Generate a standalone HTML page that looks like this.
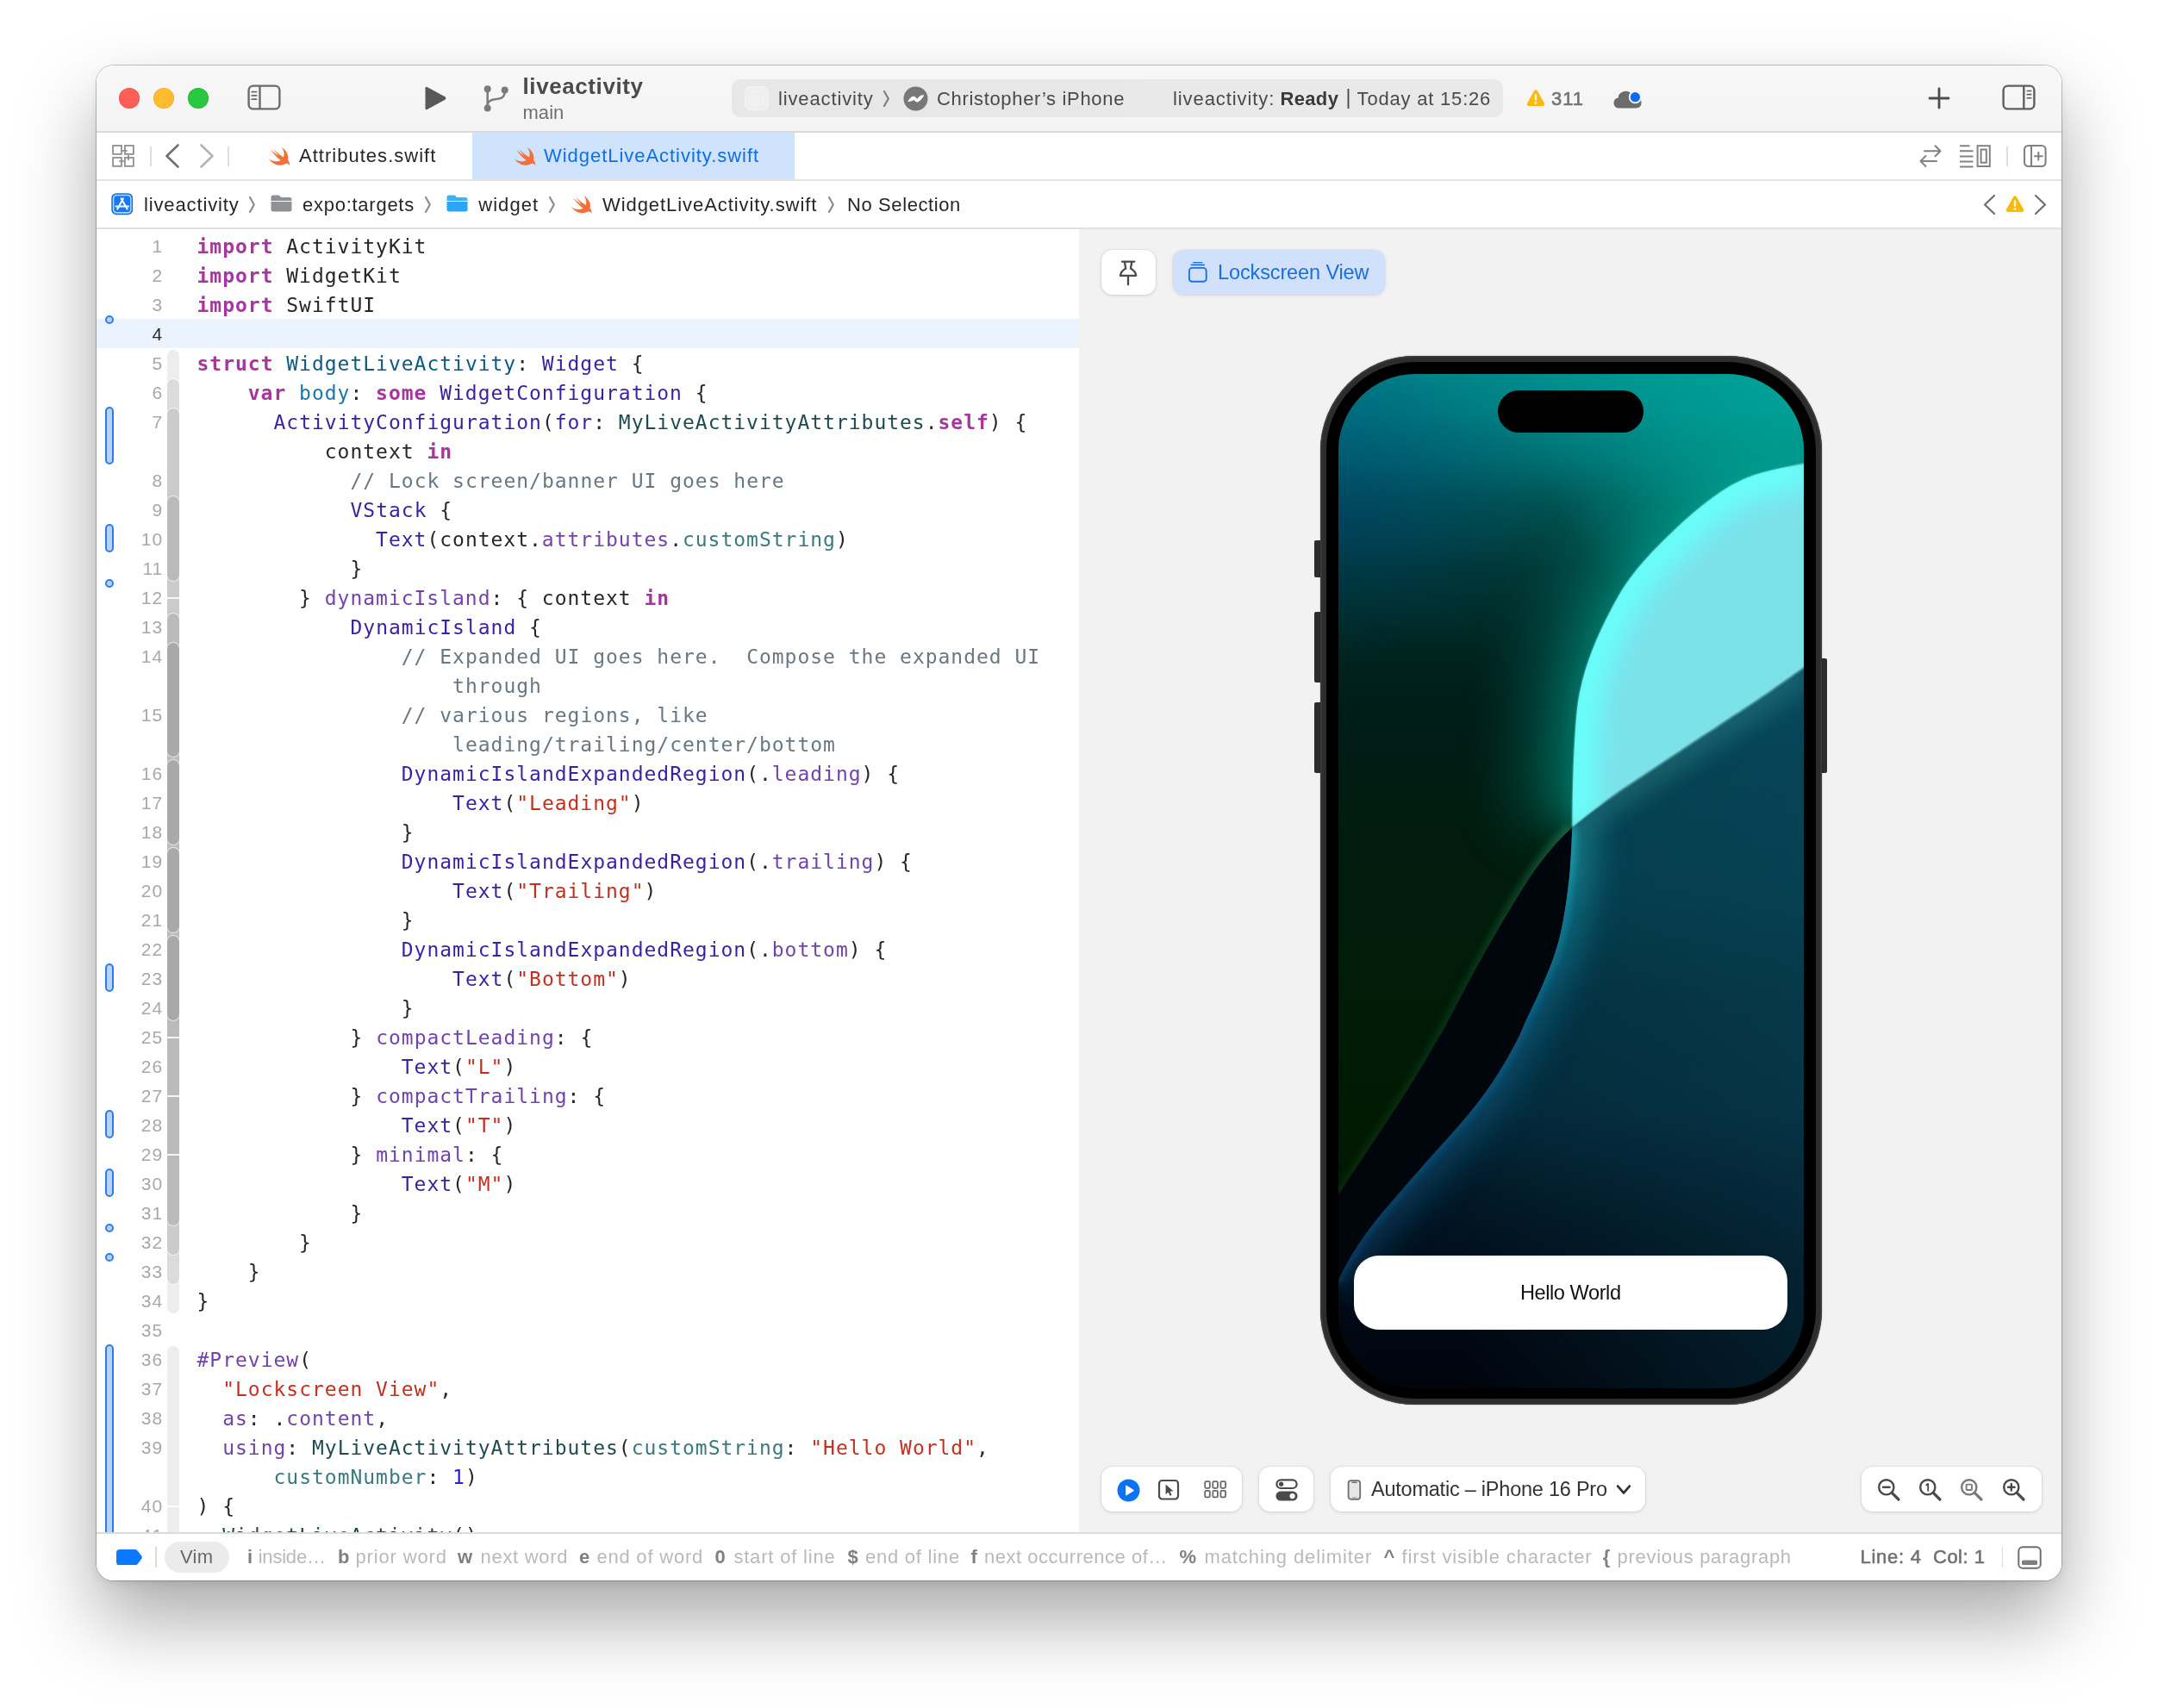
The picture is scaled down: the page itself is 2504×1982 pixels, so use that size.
<!DOCTYPE html><html><head><meta charset="utf-8"><title>Xcode</title><style>
html,body{margin:0;padding:0;background:#fff}
body{width:2504px;height:1982px;position:relative;overflow:hidden;font-family:"Liberation Sans",sans-serif}
.a{position:absolute;display:block}
.t{position:absolute;white-space:pre;font-style:normal}
#sh{left:112px;top:76px;width:2280px;height:1758px;border-radius:20px;box-shadow:0 0 0 1px rgba(0,0,0,.22),0 45px 90px rgba(0,0,0,.34),0 5px 12px rgba(0,0,0,.07)}
#win{left:112px;top:76px;width:2280px;height:1758px;border-radius:20px;overflow:hidden;background:#fff}
#abs{left:-112px;top:-76px;width:2504px;height:1982px;will-change:transform}
.ln{position:absolute;left:120.2px;width:69px;text-align:right;font:21px/34px "Liberation Sans",sans-serif;letter-spacing:1px;height:34px}
.cl{position:absolute;white-space:pre;font:23px/34px "DejaVu Sans Mono","Liberation Mono",monospace;letter-spacing:.98px;height:34px;color:#262626}
.cl i{font-style:normal}
.k{color:#a8359f;font-weight:bold}.td{color:#0b5a84}.d{color:#1676a6}.st{color:#3b1fa4}.pt{color:#1d4b50}
.pm{color:#377b80}.sm{color:#7242ae}.s{color:#c62f1e}.c{color:#697784}.n{color:#2b20cf}
</style></head><body>
<div id="sh" class="a"></div><div id="win" class="a"><div id="abs" class="a">
<div class="a" style="left:112px;top:76px;width:2280px;height:77px;background:linear-gradient(#f7f7f7,#f4f4f4)"></div>
<div class="a" style="left:112px;top:152px;width:2280px;height:1.5px;background:#dadada"></div>
<div class="a" style="left:138px;top:101.7px;width:24px;height:24px;border-radius:50%;background:#fe5f57;box-shadow:inset 0 0 0 1px #e0443e66"></div>
<div class="a" style="left:178px;top:101.7px;width:24px;height:24px;border-radius:50%;background:#febc2e;box-shadow:inset 0 0 0 1px #dea12366"></div>
<div class="a" style="left:218px;top:101.7px;width:24px;height:24px;border-radius:50%;background:#28c840;box-shadow:inset 0 0 0 1px #1aab2966"></div>
<svg class="a" style="left:285.5px;top:97px" width="41" height="32" viewBox="0 0 41 32" ><rect x="2.6" y="2.6" width="35.8" height="26.8" rx="5.2" fill="none" stroke="#6b6b6b" stroke-width="2.4"/><path d="M15.5 3v26" stroke="#6b6b6b" stroke-width="2.4"/><path d="M6.2 9.6h5.4M6.2 13.9h5.4M6.2 18.2h5.4" stroke="#6b6b6b" stroke-width="1.8" stroke-linecap="round"/></svg>
<svg class="a" style="left:489.8px;top:98px" width="30" height="32" viewBox="0 0 30 32" ><path d="M3.5 4.2 Q3.5 2 5.6 3 L26.4 14.3 Q28.4 16 26.4 17.7 L5.6 29 Q3.5 30 3.5 27.8Z" fill="#595957"/></svg>
<svg class="a" style="left:560px;top:97px" width="32" height="35" viewBox="0 0 32 35" ><g fill="none" stroke="#7b7b7b" stroke-width="2.5" stroke-linecap="round"><path d="M5.7 7v21"/><path d="M25.7 8.5 C25.7 17 21 17.5 14 18.3 C9 19 5.7 20.5 5.7 25"/></g><g fill="#7b7b7b"><circle cx="5.7" cy="6.3" r="4"/><circle cx="5.7" cy="28.4" r="4"/><circle cx="25.7" cy="7.5" r="4"/></g></svg>
<span class="t" style="left:606.5px;top:87.3px;font-size:26px;line-height:1;color:#4b4b4b;font-weight:bold;letter-spacing:0.59px;">liveactivity</span>
<span class="t" style="left:606.5px;top:119.6px;font-size:22px;line-height:1;color:#707070;letter-spacing:0.04px;">main</span>
<div class="a" style="left:848.5px;top:91.5px;width:895.5px;height:44.5px;border-radius:11px;background:#e9e9e9"></div>
<div class="a" style="left:848.5px;top:91.5px;width:480px;height:44.5px;border-radius:11px 0 0 11px;background:linear-gradient(90deg,#e7e7e7 85%,#e9e9e9)"></div>
<div class="a" style="left:864px;top:100px;width:27.5px;height:28px;border-radius:7px;background:#efefef;box-shadow:inset 0 0 0 1px #f3f3f3"></div>
<div class="a" style="left:869px;top:105.5px;width:17px;height:17px;border-radius:50%;border:1px solid #f6f6f6;box-sizing:border-box"></div>
<div class="a" style="left:873px;top:109.5px;width:9px;height:9px;border-radius:50%;border:1px solid #f6f6f6;box-sizing:border-box"></div>
<span class="t" style="left:903.0px;top:103.9px;font-size:22px;line-height:1;color:#4a4a4a;letter-spacing:0.86px;">liveactivity</span>
<svg class="a" style="left:1025px;top:104.5px" width="7" height="19" viewBox="0 0 7 19" ><path d="M1 1 L5.8 9.5 L1 18" fill="none" stroke="#808080" stroke-width="2.2" stroke-linecap="round" stroke-linejoin="round"/></svg>
<svg class="a" style="left:1047.5px;top:99.5px" width="29" height="29" viewBox="0 0 29 29" ><circle cx="14.5" cy="14.5" r="14" fill="#777"/><path d="M6 17.5 Q10 11.5 13 12.5 Q15.5 13.5 16 16.5 Q19.5 10.5 23.5 11 Q20 16.5 17 17.8 Q14 18 13.2 15 Q10 17 6 17.5Z" fill="#fff" stroke="#fff" stroke-width="1.2" stroke-linejoin="round"/></svg>
<span class="t" style="left:1087.0px;top:103.9px;font-size:22px;line-height:1;color:#4a4a4a;letter-spacing:0.67px;">Christopher’s iPhone</span>
<span class="t" style="left:1361.0px;top:103.9px;font-size:22px;line-height:1;color:#4a4a4a;letter-spacing:0.92px;">liveactivity: </span>
<span class="t" style="left:1485.4px;top:103.9px;font-size:22px;line-height:1;color:#3a3a3a;font-weight:bold;letter-spacing:0.36px;">Ready</span>
<span class="t" style="left:1561.5px;top:102.0px;font-size:23px;line-height:1;color:#4a4a4a;">|</span>
<span class="t" style="left:1574.6px;top:103.9px;font-size:22px;line-height:1;color:#4a4a4a;letter-spacing:0.80px;">Today at 15:26</span>
<svg class="a" style="left:1771px;top:103px" width="22" height="21" viewBox="0 0 21 20" ><path d="M10.5 1.2 Q11.6 1.2 12.3 2.4 L20 16 Q21 18.8 18.2 19 L2.8 19 Q0 18.8 1 16 L8.7 2.4 Q9.4 1.2 10.5 1.2Z" fill="#fcb90b"/><rect x="9.4" y="6" width="2.2" height="7" rx="1.1" fill="#fff"/><circle cx="10.5" cy="15.6" r="1.3" fill="#fff"/></svg>
<span class="t" style="left:1800.0px;top:104.0px;font-size:22px;line-height:1;color:#737373;letter-spacing:0.96px;-webkit-text-stroke:.6px #737373;">311</span>
<svg class="a" style="left:1871px;top:102px" width="36" height="26" viewBox="0 0 36 26" ><path d="M8.5 23.5 Q1.5 23.5 1.5 17.5 Q1.5 12.5 6.5 11.8 Q7 6 12.5 4.2 Q19 2.5 22.5 8 Q26 7.5 28.5 10.5 Q33.5 11 33.5 17 Q33.5 23.5 27 23.5Z" fill="#6c6c6c"/><circle cx="26.4" cy="10.7" r="7.6" fill="#f5f5f5"/><circle cx="26.4" cy="10.7" r="5.6" fill="#0a6cf5"/></svg>
<svg class="a" style="left:2237px;top:101px" width="26" height="26" viewBox="0 0 26 26" ><path d="M13 2v22M2 13h22" stroke="#4d4d4d" stroke-width="2.8" stroke-linecap="round"/></svg>
<svg class="a" style="left:2321.5px;top:97px" width="41" height="32" viewBox="0 0 41 32" ><rect x="2.6" y="2.6" width="35.8" height="26.8" rx="5.2" fill="none" stroke="#5e5e5e" stroke-width="2.4"/><path d="M26.3 3v26" stroke="#5e5e5e" stroke-width="2.4"/><path d="M30.2 8.5h4.6M30.2 12.6h4.6M30.2 16.7h4.6" stroke="#5e5e5e" stroke-width="1.6" stroke-linecap="round"/></svg>
<div class="a" style="left:112px;top:153.5px;width:2280px;height:55px;background:#fff"></div>
<div class="a" style="left:548px;top:153.5px;width:373.5px;height:55px;background:#cfe3fd"></div>
<div class="a" style="left:112px;top:208px;width:2280px;height:1.5px;background:#e2e2e2"></div>
<svg class="a" style="left:129px;top:167px" width="28" height="28" viewBox="0 0 28 28" ><g fill="none" stroke="#8b8b8b" stroke-width="1.7"><rect x="2.05" y="1.95" width="9.9" height="9.9"/><rect x="15.95" y="1.95" width="9.9" height="9.9"/><rect x="2.05" y="15.95" width="9.9" height="9.9"/><rect x="15.95" y="15.95" width="9.9" height="9.9"/><path d="M12.6 7.9h6M20 12.6v6.4M9.2 20h6"/></g></svg>
<div class="a" style="left:174px;top:169.5px;width:2px;height:23px;background:#dedede"></div>
<svg class="a" style="left:190px;top:166px" width="20" height="30" viewBox="0 0 20 30" ><path d="M16.5 2.5 L3.5 15 L16.5 27.5" fill="none" stroke="#707070" stroke-width="2.6" stroke-linecap="round" stroke-linejoin="round"/></svg>
<svg class="a" style="left:230px;top:166px" width="20" height="30" viewBox="0 0 20 30" ><path d="M3.5 2.5 L16.5 15 L3.5 27.5" fill="none" stroke="#b3b3b3" stroke-width="2.6" stroke-linecap="round" stroke-linejoin="round"/></svg>
<div class="a" style="left:264px;top:169.5px;width:2px;height:23px;background:#dedede"></div>
<svg class="a" style="left:312px;top:170.5px" width="24.5" height="21.5" viewBox="2.4 3.4 18.5 16.7" preserveAspectRatio="none"><defs><linearGradient id="sg312" x1="0" y1="0" x2="0" y2="1"><stop offset="0" stop-color="#f88a36"/><stop offset="1" stop-color="#f4502f"/></linearGradient></defs><path d="M13.543 3.41c4.114 2.47 6.545 7.162 5.549 11.131-.024.093-.05.181-.076.272l.002.001c2.062 2.538 1.5 5.258 1.236 4.745-1.072-2.086-3.066-1.568-4.088-1.043a6.803 6.803 0 0 1-.281.158l-.02.012-.002.002c-2.115 1.123-4.957 1.205-7.812-.022a12.568 12.568 0 0 1-5.64-4.838c.649.48 1.35.902 2.097 1.252 3.019 1.414 6.051 1.311 8.197-.002C9.651 12.73 7.101 9.67 5.146 7.191a10.628 10.628 0 0 1-1.005-1.384c2.34 2.142 6.038 4.83 7.365 5.576C8.69 8.408 6.208 4.743 6.324 4.86c4.436 4.47 8.528 6.996 8.528 6.996.154.085.27.154.36.213.085-.215.16-.437.224-.668.708-2.588-.09-5.548-1.893-7.992z" fill="#f4703a"/></svg>
<span class="t" style="left:347.0px;top:170.0px;font-size:22px;line-height:1;color:#262626;letter-spacing:1.02px;">Attributes.swift</span>
<svg class="a" style="left:596.5px;top:170.5px" width="24.5" height="21.5" viewBox="2.4 3.4 18.5 16.7" preserveAspectRatio="none"><defs><linearGradient id="sg596" x1="0" y1="0" x2="0" y2="1"><stop offset="0" stop-color="#f88a36"/><stop offset="1" stop-color="#f4502f"/></linearGradient></defs><path d="M13.543 3.41c4.114 2.47 6.545 7.162 5.549 11.131-.024.093-.05.181-.076.272l.002.001c2.062 2.538 1.5 5.258 1.236 4.745-1.072-2.086-3.066-1.568-4.088-1.043a6.803 6.803 0 0 1-.281.158l-.02.012-.002.002c-2.115 1.123-4.957 1.205-7.812-.022a12.568 12.568 0 0 1-5.64-4.838c.649.48 1.35.902 2.097 1.252 3.019 1.414 6.051 1.311 8.197-.002C9.651 12.73 7.101 9.67 5.146 7.191a10.628 10.628 0 0 1-1.005-1.384c2.34 2.142 6.038 4.83 7.365 5.576C8.69 8.408 6.208 4.743 6.324 4.86c4.436 4.47 8.528 6.996 8.528 6.996.154.085.27.154.36.213.085-.215.16-.437.224-.668.708-2.588-.09-5.548-1.893-7.992z" fill="#f4703a"/></svg>
<span class="t" style="left:631.0px;top:170.0px;font-size:22px;line-height:1;color:#0f6fe6;letter-spacing:0.96px;">WidgetLiveActivity.swift</span>
<svg class="a" style="left:2226px;top:166px" width="28" height="30" viewBox="0 0 28 30" ><g fill="none" stroke="#828282" stroke-width="2" stroke-linecap="round" stroke-linejoin="round"><path d="M7 9.2h18.5M19.5 3.2l6 6-6 6"/><path d="M21 21h-18.5M8.5 15l-6 6 6 6"/></g></svg>
<svg class="a" style="left:2273px;top:167px" width="38" height="28" viewBox="0 0 38 28" ><g fill="none" stroke="#828282" stroke-width="2"><path d="M1 2.2h11.5M1 8.3h15.5M1 14.4h15.5M1 20.5h15.5M1 26.4h15.5"/><rect x="21.6" y="2.2" width="14.2" height="23.8"/><rect x="25.6" y="6.5" width="6.2" height="15.2"/></g></svg>
<div class="a" style="left:2328px;top:169.5px;width:1.5px;height:23px;background:#dedede"></div>
<svg class="a" style="left:2346.5px;top:167px" width="29" height="28" viewBox="0 0 29 28" ><g fill="none" stroke="#828282" stroke-width="2.1" stroke-linecap="round"><rect x="2" y="2" width="24.6" height="24" rx="4.5"/><path d="M10 2v24"/><path d="M18.3 9.8v8.8M13.9 14.2h8.8"/></g></svg>
<div class="a" style="left:112px;top:209.5px;width:2280px;height:55px;background:#fff"></div>
<div class="a" style="left:112px;top:264px;width:2280px;height:1.5px;background:#e0e0e0"></div>
<svg class="a" style="left:129px;top:223.5px" width="26" height="26" viewBox="0 0 26 26" ><rect x="0.3" y="0.2" width="24.8" height="25" rx="5.6" fill="#1e6adb"/><rect x="1.8" y="1.7" width="21.8" height="22" rx="4.4" fill="#a2d8ff"/><rect x="3.4" y="3.3" width="18.6" height="18.8" rx="3" fill="#1579f6"/><g stroke="#fff" stroke-width="2" stroke-linecap="round" fill="none"><path d="M13.9 6.4 L7.3 18.6M11.6 6.4 L18.6 18.4M5.6 15.4h14.4"/></g></svg>
<span class="t" style="left:167.0px;top:226.6px;font-size:22px;line-height:1;color:#262626;letter-spacing:0.86px;">liveactivity</span>
<svg class="a" style="left:288.5px;top:228px" width="7" height="19" viewBox="0 0 7 19" ><path d="M1 1 L5.8 9.5 L1 18" fill="none" stroke="#8c8c8c" stroke-width="2.2" stroke-linecap="round" stroke-linejoin="round"/></svg>
<svg class="a" style="left:314px;top:226px" width="25" height="20" viewBox="0 0 25 20" ><path d="M0.5 3 Q0.5 0.5 3 0.5 L8.5 0.5 Q10 0.5 11 1.8 L12 3 L22 3 Q24.5 3 24.5 5.5 L24.5 7 L0.5 7Z" fill="#8e9294"/><path d="M0.5 8 L24.5 8 L24.5 17 Q24.5 19.5 22 19.5 L3 19.5 Q0.5 19.5 0.5 17Z" fill="#8e9294"/></svg>
<span class="t" style="left:351.0px;top:226.6px;font-size:22px;line-height:1;color:#262626;letter-spacing:0.74px;">expo:targets</span>
<svg class="a" style="left:492.5px;top:228px" width="7" height="19" viewBox="0 0 7 19" ><path d="M1 1 L5.8 9.5 L1 18" fill="none" stroke="#8c8c8c" stroke-width="2.2" stroke-linecap="round" stroke-linejoin="round"/></svg>
<svg class="a" style="left:517.5px;top:226px" width="25" height="20" viewBox="0 0 25 20" ><path d="M0.5 3 Q0.5 0.5 3 0.5 L8.5 0.5 Q10 0.5 11 1.8 L12 3 L22 3 Q24.5 3 24.5 5.5 L24.5 7 L0.5 7Z" fill="#38b3f8"/><path d="M0.5 8 L24.5 8 L24.5 17 Q24.5 19.5 22 19.5 L3 19.5 Q0.5 19.5 0.5 17Z" fill="#2ba5f4"/></svg>
<span class="t" style="left:555.2px;top:226.6px;font-size:22px;line-height:1;color:#262626;letter-spacing:1.06px;">widget</span>
<svg class="a" style="left:636.5px;top:228px" width="7" height="19" viewBox="0 0 7 19" ><path d="M1 1 L5.8 9.5 L1 18" fill="none" stroke="#8c8c8c" stroke-width="2.2" stroke-linecap="round" stroke-linejoin="round"/></svg>
<svg class="a" style="left:662.5px;top:227px" width="24" height="21" viewBox="2.4 3.4 18.5 16.7" preserveAspectRatio="none"><defs><linearGradient id="sg662" x1="0" y1="0" x2="0" y2="1"><stop offset="0" stop-color="#f88a36"/><stop offset="1" stop-color="#f4502f"/></linearGradient></defs><path d="M13.543 3.41c4.114 2.47 6.545 7.162 5.549 11.131-.024.093-.05.181-.076.272l.002.001c2.062 2.538 1.5 5.258 1.236 4.745-1.072-2.086-3.066-1.568-4.088-1.043a6.803 6.803 0 0 1-.281.158l-.02.012-.002.002c-2.115 1.123-4.957 1.205-7.812-.022a12.568 12.568 0 0 1-5.64-4.838c.649.48 1.35.902 2.097 1.252 3.019 1.414 6.051 1.311 8.197-.002C9.651 12.73 7.101 9.67 5.146 7.191a10.628 10.628 0 0 1-1.005-1.384c2.34 2.142 6.038 4.83 7.365 5.576C8.69 8.408 6.208 4.743 6.324 4.86c4.436 4.47 8.528 6.996 8.528 6.996.154.085.27.154.36.213.085-.215.16-.437.224-.668.708-2.588-.09-5.548-1.893-7.992z" fill="#f4703a"/></svg>
<span class="t" style="left:699.0px;top:226.6px;font-size:22px;line-height:1;color:#262626;letter-spacing:0.93px;">WidgetLiveActivity.swift</span>
<svg class="a" style="left:961px;top:228px" width="7" height="19" viewBox="0 0 7 19" ><path d="M1 1 L5.8 9.5 L1 18" fill="none" stroke="#8c8c8c" stroke-width="2.2" stroke-linecap="round" stroke-linejoin="round"/></svg>
<span class="t" style="left:983.0px;top:226.6px;font-size:22px;line-height:1;color:#262626;letter-spacing:0.60px;">No Selection</span>
<svg class="a" style="left:2300px;top:225px" width="17" height="25" viewBox="0 0 17 25" ><path d="M14 2 L3 12.5 L14 23" fill="none" stroke="#6e6e6e" stroke-width="2.2" stroke-linecap="round" stroke-linejoin="round"/></svg>
<svg class="a" style="left:2327px;top:226px" width="22" height="21" viewBox="0 0 21 20" ><path d="M10.5 1.2 Q11.6 1.2 12.3 2.4 L20 16 Q21 18.8 18.2 19 L2.8 19 Q0 18.8 1 16 L8.7 2.4 Q9.4 1.2 10.5 1.2Z" fill="#fcb90b"/><rect x="9.4" y="6" width="2.2" height="7" rx="1.1" fill="#fff"/><circle cx="10.5" cy="15.6" r="1.3" fill="#fff"/></svg>
<svg class="a" style="left:2359px;top:225px" width="17" height="25" viewBox="0 0 17 25" ><path d="M3 2 L14 12.5 L3 23" fill="none" stroke="#6e6e6e" stroke-width="2.2" stroke-linecap="round" stroke-linejoin="round"/></svg>
<div class="a" style="left:112px;top:265.5px;width:1140px;height:1513.5px;background:#fff;overflow:hidden">
<div class="a" style="left:-112px;top:-265.5px;width:2504px;height:1982px">
<div class="a" style="left:112px;top:370.4px;width:1140px;height:33.2px;background:#ebf3fe"></div>
<div class="a" style="left:194px;top:405.5px;width:14px;height:1118.0px;background:#ededed;border-radius:7px 7px 7px 7px;box-shadow:0 0 0 1.2px rgba(255,255,255,.55)"></div>
<div class="a" style="left:194px;top:439.5px;width:14px;height:1050.0px;background:#dbdbdb;border-radius:7px 7px 7px 7px;box-shadow:0 0 0 1.2px rgba(255,255,255,.55)"></div>
<div class="a" style="left:194px;top:473.5px;width:14px;height:982.0px;background:#cbcbcb;border-radius:7px 7px 7px 7px;box-shadow:0 0 0 1.2px rgba(255,255,255,.55)"></div>
<div class="a" style="left:194px;top:575.5px;width:14px;height:98.0px;background:#bababa;border-radius:7px 7px 7px 7px;box-shadow:0 0 0 1.2px rgba(255,255,255,.55)"></div>
<div class="a" style="left:194px;top:711.5px;width:14px;height:710.0px;background:#bababa;border-radius:7px 7px 7px 7px;box-shadow:0 0 0 1.2px rgba(255,255,255,.55)"></div>
<div class="a" style="left:194px;top:745.5px;width:14px;height:132.0px;background:#a9a9a9;border-radius:7px 7px 7px 7px;box-shadow:0 0 0 1.2px rgba(255,255,255,.55)"></div>
<div class="a" style="left:194px;top:881.5px;width:14px;height:98.0px;background:#a9a9a9;border-radius:7px 7px 7px 7px;box-shadow:0 0 0 1.2px rgba(255,255,255,.55)"></div>
<div class="a" style="left:194px;top:983.5px;width:14px;height:98.0px;background:#a9a9a9;border-radius:7px 7px 7px 7px;box-shadow:0 0 0 1.2px rgba(255,255,255,.55)"></div>
<div class="a" style="left:194px;top:1085.5px;width:14px;height:98.0px;background:#a9a9a9;border-radius:7px 7px 7px 7px;box-shadow:0 0 0 1.2px rgba(255,255,255,.55)"></div>
<div class="a" style="left:194px;top:1561.5px;width:14px;height:236.5px;background:#ededed;border-radius:7px 7px 0px 0px;box-shadow:0 0 0 1.2px rgba(255,255,255,.55)"></div>
<div class="a" style="left:193px;top:692.5px;width:16px;height:2px;background:#fff;opacity:.85"></div>
<div class="a" style="left:193px;top:1202.5px;width:16px;height:2px;background:#fff;opacity:.85"></div>
<div class="a" style="left:193px;top:1270.5px;width:16px;height:2px;background:#fff;opacity:.85"></div>
<div class="a" style="left:193px;top:1338.5px;width:16px;height:2px;background:#fff;opacity:.85"></div>
<div class="a" style="left:193px;top:1746.5px;width:16px;height:2px;background:#fff;opacity:.85"></div>
<div class="a" style="left:122px;top:471.8px;width:10px;height:67.7px;box-sizing:border-box;border:2px solid #2b7cf2;background:#b7d2fd;border-radius:5px"></div>
<div class="a" style="left:122px;top:607.8px;width:10px;height:33.7px;box-sizing:border-box;border:2px solid #2b7cf2;background:#b7d2fd;border-radius:5px"></div>
<div class="a" style="left:122px;top:1117.8px;width:10px;height:33.7px;box-sizing:border-box;border:2px solid #2b7cf2;background:#b7d2fd;border-radius:5px"></div>
<div class="a" style="left:122px;top:1287.8px;width:10px;height:33.7px;box-sizing:border-box;border:2px solid #2b7cf2;background:#b7d2fd;border-radius:5px"></div>
<div class="a" style="left:122px;top:1355.8px;width:10px;height:33.7px;box-sizing:border-box;border:2px solid #2b7cf2;background:#b7d2fd;border-radius:5px"></div>
<div class="a" style="left:122px;top:1559.8px;width:10px;height:305.7px;box-sizing:border-box;border:2px solid #2b7cf2;background:#b7d2fd;border-radius:5px"></div>
<div class="a" style="left:122px;top:366.2px;width:10px;height:10px;box-sizing:border-box;border:2px solid #2b7cf2;background:#b7d2fd;border-radius:50%"></div>
<div class="a" style="left:122px;top:672.2px;width:10px;height:10px;box-sizing:border-box;border:2px solid #2b7cf2;background:#b7d2fd;border-radius:50%"></div>
<div class="a" style="left:122px;top:1420.2px;width:10px;height:10px;box-sizing:border-box;border:2px solid #2b7cf2;background:#b7d2fd;border-radius:50%"></div>
<div class="a" style="left:122px;top:1454.2px;width:10px;height:10px;box-sizing:border-box;border:2px solid #2b7cf2;background:#b7d2fd;border-radius:50%"></div>
<div class="ln" style="top:269.0px;color:#a8a8a8">1</div>
<div class="cl" style="top:268.9px;left:228.5px"><i class="k">import</i> ActivityKit</div>
<div class="ln" style="top:303.0px;color:#a8a8a8">2</div>
<div class="cl" style="top:302.9px;left:228.5px"><i class="k">import</i> WidgetKit</div>
<div class="ln" style="top:337.0px;color:#a8a8a8">3</div>
<div class="cl" style="top:336.9px;left:228.5px"><i class="k">import</i> SwiftUI</div>
<div class="ln" style="top:371.0px;color:#2b2b2b">4</div>
<div class="ln" style="top:405.0px;color:#a8a8a8">5</div>
<div class="cl" style="top:404.9px;left:228.5px"><i class="k">struct</i> <i class="td">WidgetLiveActivity</i>: <i class="st">Widget</i> {</div>
<div class="ln" style="top:439.0px;color:#a8a8a8">6</div>
<div class="cl" style="top:438.9px;left:287.8px"><i class="k">var</i> <i class="d">body</i>: <i class="k">some</i> <i class="st">WidgetConfiguration</i> {</div>
<div class="ln" style="top:473.0px;color:#a8a8a8">7</div>
<div class="cl" style="top:472.9px;left:317.5px"><i class="st">ActivityConfiguration</i>(<i class="st">for</i>: <i class="pt">MyLiveActivityAttributes</i>.<i class="k">self</i>) {</div>
<div class="cl" style="top:506.9px;left:376.8px">context <i class="k">in</i></div>
<div class="ln" style="top:541.0px;color:#a8a8a8">8</div>
<div class="cl" style="top:541.0px;left:406.5px"><i class="c">// Lock screen/banner UI goes here</i></div>
<div class="ln" style="top:575.0px;color:#a8a8a8">9</div>
<div class="cl" style="top:575.0px;left:406.5px"><i class="st">VStack</i> {</div>
<div class="ln" style="top:609.0px;color:#a8a8a8">10</div>
<div class="cl" style="top:609.0px;left:436.1px"><i class="st">Text</i>(context.<i class="sm">attributes</i>.<i class="pm">customString</i>)</div>
<div class="ln" style="top:643.0px;color:#a8a8a8">11</div>
<div class="cl" style="top:643.0px;left:406.5px">}</div>
<div class="ln" style="top:677.0px;color:#a8a8a8">12</div>
<div class="cl" style="top:677.0px;left:347.1px">} <i class="sm">dynamicIsland</i>: { context <i class="k">in</i></div>
<div class="ln" style="top:711.0px;color:#a8a8a8">13</div>
<div class="cl" style="top:711.0px;left:406.5px"><i class="st">DynamicIsland</i> {</div>
<div class="ln" style="top:745.0px;color:#a8a8a8">14</div>
<div class="cl" style="top:745.0px;left:465.8px"><i class="c">// Expanded UI goes here.  Compose the expanded UI</i></div>
<div class="cl" style="top:779.0px;left:525.1px"><i class="c">through</i></div>
<div class="ln" style="top:813.0px;color:#a8a8a8">15</div>
<div class="cl" style="top:813.0px;left:465.8px"><i class="c">// various regions, like</i></div>
<div class="cl" style="top:847.0px;left:525.1px"><i class="c">leading/trailing/center/bottom</i></div>
<div class="ln" style="top:881.0px;color:#a8a8a8">16</div>
<div class="cl" style="top:881.0px;left:465.8px"><i class="st">DynamicIslandExpandedRegion</i>(.<i class="sm">leading</i>) {</div>
<div class="ln" style="top:915.0px;color:#a8a8a8">17</div>
<div class="cl" style="top:915.0px;left:525.1px"><i class="st">Text</i>(<i class="s">"Leading"</i>)</div>
<div class="ln" style="top:949.0px;color:#a8a8a8">18</div>
<div class="cl" style="top:949.0px;left:465.8px">}</div>
<div class="ln" style="top:983.0px;color:#a8a8a8">19</div>
<div class="cl" style="top:983.0px;left:465.8px"><i class="st">DynamicIslandExpandedRegion</i>(.<i class="sm">trailing</i>) {</div>
<div class="ln" style="top:1017.0px;color:#a8a8a8">20</div>
<div class="cl" style="top:1017.0px;left:525.1px"><i class="st">Text</i>(<i class="s">"Trailing"</i>)</div>
<div class="ln" style="top:1051.0px;color:#a8a8a8">21</div>
<div class="cl" style="top:1051.0px;left:465.8px">}</div>
<div class="ln" style="top:1085.0px;color:#a8a8a8">22</div>
<div class="cl" style="top:1085.0px;left:465.8px"><i class="st">DynamicIslandExpandedRegion</i>(.<i class="sm">bottom</i>) {</div>
<div class="ln" style="top:1119.0px;color:#a8a8a8">23</div>
<div class="cl" style="top:1119.0px;left:525.1px"><i class="st">Text</i>(<i class="s">"Bottom"</i>)</div>
<div class="ln" style="top:1153.0px;color:#a8a8a8">24</div>
<div class="cl" style="top:1153.0px;left:465.8px">}</div>
<div class="ln" style="top:1187.0px;color:#a8a8a8">25</div>
<div class="cl" style="top:1187.0px;left:406.5px">} <i class="sm">compactLeading</i>: {</div>
<div class="ln" style="top:1221.0px;color:#a8a8a8">26</div>
<div class="cl" style="top:1221.0px;left:465.8px"><i class="st">Text</i>(<i class="s">"L"</i>)</div>
<div class="ln" style="top:1255.0px;color:#a8a8a8">27</div>
<div class="cl" style="top:1255.0px;left:406.5px">} <i class="sm">compactTrailing</i>: {</div>
<div class="ln" style="top:1289.0px;color:#a8a8a8">28</div>
<div class="cl" style="top:1289.0px;left:465.8px"><i class="st">Text</i>(<i class="s">"T"</i>)</div>
<div class="ln" style="top:1323.0px;color:#a8a8a8">29</div>
<div class="cl" style="top:1323.0px;left:406.5px">} <i class="sm">minimal</i>: {</div>
<div class="ln" style="top:1357.0px;color:#a8a8a8">30</div>
<div class="cl" style="top:1357.0px;left:465.8px"><i class="st">Text</i>(<i class="s">"M"</i>)</div>
<div class="ln" style="top:1391.0px;color:#a8a8a8">31</div>
<div class="cl" style="top:1391.0px;left:406.5px">}</div>
<div class="ln" style="top:1425.0px;color:#a8a8a8">32</div>
<div class="cl" style="top:1425.0px;left:347.1px">}</div>
<div class="ln" style="top:1459.0px;color:#a8a8a8">33</div>
<div class="cl" style="top:1459.0px;left:287.8px">}</div>
<div class="ln" style="top:1493.0px;color:#a8a8a8">34</div>
<div class="cl" style="top:1493.0px;left:228.5px">}</div>
<div class="ln" style="top:1527.0px;color:#a8a8a8">35</div>
<div class="ln" style="top:1561.0px;color:#a8a8a8">36</div>
<div class="cl" style="top:1561.0px;left:228.5px"><i class="sm">#Preview</i>(</div>
<div class="ln" style="top:1595.0px;color:#a8a8a8">37</div>
<div class="cl" style="top:1595.0px;left:258.2px"><i class="s">"Lockscreen View"</i>,</div>
<div class="ln" style="top:1629.0px;color:#a8a8a8">38</div>
<div class="cl" style="top:1629.0px;left:258.2px"><i class="sm">as</i>: .<i class="sm">content</i>,</div>
<div class="ln" style="top:1663.0px;color:#a8a8a8">39</div>
<div class="cl" style="top:1663.0px;left:258.2px"><i class="sm">using</i>: <i class="pt">MyLiveActivityAttributes</i>(<i class="pm">customString</i>: <i class="s">"Hello World"</i>,</div>
<div class="cl" style="top:1697.0px;left:317.5px"><i class="pm">customNumber</i>: <i class="n">1</i>)</div>
<div class="ln" style="top:1731.0px;color:#a8a8a8">40</div>
<div class="cl" style="top:1731.0px;left:228.5px">) {</div>
<div class="ln" style="top:1765.0px;color:#a8a8a8">41</div>
<div class="cl" style="top:1765.0px;left:258.2px"><i class="pt">WidgetLiveActivity</i>()</div>
</div></div>
<div class="a" style="left:1252px;top:265.5px;width:1140px;height:1513.5px;background:#f2f2f2"></div>
<div class="a" style="left:1277.5px;top:289.5px;width:63.5px;height:52.5px;background:#fff;border-radius:13px;box-shadow:0 0 0 1px rgba(0,0,0,.04),0 1px 4px rgba(0,0,0,.12)"></div>
<svg class="a" style="left:1297px;top:301px" width="24" height="31" viewBox="0 0 24 31" ><g fill="none" stroke="#4a4a4a" stroke-width="2.3" stroke-linecap="round" stroke-linejoin="round"><path d="M5 2.6h14.4M7.9 2.8 Q8.6 7 9.2 10.4 Q3.6 13.6 3 18.8 L21.2 18.8 Q20.6 13.6 15 10.4 Q15.6 7 16.3 2.8M12 19v10.3"/></g></svg>
<div class="a" style="left:1360.5px;top:289.5px;width:246px;height:52.5px;background:#d1e1fb;border-radius:13px;box-shadow:0 0 0 1px rgba(0,0,0,.03),0 1px 4px rgba(0,0,0,.10)"></div>
<svg class="a" style="left:1377px;top:303px" width="24" height="26" viewBox="0 0 24 26" ><g fill="none" stroke="#1b72e4" stroke-width="1.9" stroke-linecap="round"><rect x="2.9" y="7.9" width="19.8" height="15.9" rx="3.4"/><path d="M5.4 4.3h14.8" stroke-width="1.7"/><path d="M7.8 1.6h10" stroke-width="1.4"/></g></svg>
<span class="t" style="left:1413.0px;top:304.9px;font-size:23.5px;line-height:1;color:#1a6fe0;letter-spacing:-0.12px;">Lockscreen View</span>
<div class="a" style="left:1525px;top:627px;width:9px;height:43px;background:#2c2c2c;border-radius:2px"></div>
<div class="a" style="left:1525px;top:710px;width:9px;height:82px;background:#2c2c2c;border-radius:2px"></div>
<div class="a" style="left:1525px;top:815px;width:9px;height:82px;background:#2c2c2c;border-radius:2px"></div>
<div class="a" style="left:2111px;top:764px;width:8.5px;height:133px;background:#2c2c2c;border-radius:2px"></div>
<div class="a" style="left:1531.5px;top:412.5px;width:582px;height:1217.5px;border-radius:110px;background:#2d2d2d;box-shadow:inset 0 0 0 1.5px #3c3c3c,0 0 1.5px rgba(0,0,0,.5)"></div>
<div class="a" style="left:1538.5px;top:419.5px;width:568px;height:1203.5px;border-radius:103px;background:#000"></div>
<div class="a" style="left:1552.5px;top:433.5px;width:540.5px;height:1177.5px;border-radius:89px;overflow:hidden;background:#00151a">
<svg class="a" style="left:0;top:0" width="540.5" height="1177.5" viewBox="1552.5 433.5 540.5 1177.5">
<defs>
<filter id="f1_2" filterUnits="userSpaceOnUse" x="1350" y="250" width="950" height="1550"><feGaussianBlur stdDeviation="1.2"/></filter>
<filter id="f4" filterUnits="userSpaceOnUse" x="1350" y="250" width="950" height="1550"><feGaussianBlur stdDeviation="4"/></filter>
<filter id="f8" filterUnits="userSpaceOnUse" x="1350" y="250" width="950" height="1550"><feGaussianBlur stdDeviation="8"/></filter>
<filter id="f14" filterUnits="userSpaceOnUse" x="1350" y="250" width="950" height="1550"><feGaussianBlur stdDeviation="14"/></filter>
<filter id="f20" filterUnits="userSpaceOnUse" x="1350" y="250" width="950" height="1550"><feGaussianBlur stdDeviation="20"/></filter>
<filter id="f34" filterUnits="userSpaceOnUse" x="1350" y="250" width="950" height="1550"><feGaussianBlur stdDeviation="34"/></filter>
<linearGradient id="bgv" gradientUnits="userSpaceOnUse" x1="0" y1="433" x2="0" y2="1611"><stop offset="0.0000" stop-color="#008d8d"/><stop offset="0.0399" stop-color="#008283"/><stop offset="0.0849" stop-color="#006e70"/><stop offset="0.1273" stop-color="#005352"/><stop offset="0.1910" stop-color="#003836"/><stop offset="0.2767" stop-color="#002420"/><stop offset="0.3294" stop-color="#001d18"/><stop offset="0.3964" stop-color="#011c12"/><stop offset="0.5662" stop-color="#011c09"/><stop offset="0.7360" stop-color="#011a02"/><stop offset="1.0000" stop-color="#001500"/></linearGradient>
<radialGradient id="blu" gradientUnits="userSpaceOnUse" cx="1540" cy="590" r="260" gradientTransform="translate(1540 590) scale(1 .65) translate(-1540 -590)"><stop offset="0" stop-color="#00386e" stop-opacity=".46"/><stop offset="1" stop-color="#00386e" stop-opacity="0"/></radialGradient>
<radialGradient id="lft" gradientUnits="userSpaceOnUse" cx="1545" cy="425" r="250"><stop offset="0" stop-color="#004674" stop-opacity=".3"/><stop offset="1" stop-color="#004674" stop-opacity="0"/></radialGradient>
<radialGradient id="tr" gradientUnits="userSpaceOnUse" cx="2100" cy="440" r="330"><stop offset="0" stop-color="#00aa9e" stop-opacity=".85"/><stop offset=".5" stop-color="#00a89c" stop-opacity=".5"/><stop offset="1" stop-color="#00a89c" stop-opacity="0"/></radialGradient>
<linearGradient id="wv" gradientUnits="userSpaceOnUse" x1="0" y1="800" x2="0" y2="1611"><stop offset="0.0000" stop-color="#05485a"/><stop offset="0.1233" stop-color="#04404f"/><stop offset="0.2836" stop-color="#043c4c"/><stop offset="0.4316" stop-color="#04303f"/><stop offset="0.6042" stop-color="#042838"/><stop offset="0.7275" stop-color="#021826"/><stop offset="0.8385" stop-color="#010c18"/><stop offset="1.0000" stop-color="#00040c"/></linearGradient>
<linearGradient id="wvr" gradientUnits="userSpaceOnUse" x1="1700" y1="0" x2="2094" y2="0"><stop offset="0" stop-color="#0a4a5e" stop-opacity="0"/><stop offset="1" stop-color="#0a4a5e" stop-opacity=".35"/></linearGradient>
<linearGradient id="wglow" gradientUnits="userSpaceOnUse" x1="0" y1="958" x2="0" y2="1490"><stop offset="0" stop-color="#2fd0d6"/><stop offset=".2" stop-color="#169ab4"/><stop offset=".45" stop-color="#0c6c9a"/><stop offset="1" stop-color="#0a4a78"/></linearGradient>
<linearGradient id="gglow" gradientUnits="userSpaceOnUse" x1="0" y1="940" x2="0" y2="1390"><stop offset="0" stop-color="#2c8c5c"/><stop offset=".2" stop-color="#166238"/><stop offset=".45" stop-color="#0c4220"/><stop offset="1" stop-color="#083410"/></linearGradient>
<clipPath id="cg"><path d="M1551 432 L2094 432 L2094 537 C2083.1 539.7 2047.6 545.6 2028.3 553.3 C2009.0 561.0 1994.9 570.9 1978.2 583.4 C1961.5 595.9 1942.6 613.9 1928.0 628.5 C1913.4 643.1 1900.8 657.0 1890.4 671.2 C1880.0 685.4 1872.9 699.2 1865.4 713.8 C1857.9 728.4 1850.5 745.1 1845.3 758.9 C1840.1 772.7 1836.8 784.1 1834.0 796.5 C1831.2 808.9 1830.0 816.5 1828.5 833.0 C1827.0 849.5 1825.8 874.6 1825.0 895.7 C1824.2 916.8 1824.0 948.8 1823.8 959.4 C1820.3 963.0 1810.4 972.0 1802.7 981.0 C1795.0 990.0 1786.0 1001.4 1777.6 1013.5 C1769.2 1025.6 1760.8 1039.8 1752.5 1053.6 C1744.2 1067.3 1735.8 1081.4 1727.5 1096.0 C1719.2 1110.6 1710.8 1125.9 1702.4 1141.4 C1694.0 1156.9 1684.4 1176.1 1677.3 1189.0 C1670.2 1201.9 1667.1 1207.0 1660.0 1219.0 C1652.9 1231.0 1644.4 1245.6 1634.7 1261.0 C1625.0 1276.4 1612.5 1295.4 1602.0 1311.3 C1591.5 1327.2 1580.5 1343.6 1572.0 1356.4 C1563.5 1369.2 1554.5 1382.7 1551.0 1388.0 L1551 1388 Z"/></clipPath>
<clipPath id="cw"><path d="M1823.8 959.4 C1827.0 956.9 1834.3 950.7 1842.7 944.3 C1851.1 937.9 1863.8 928.6 1874.3 921.2 C1884.8 913.8 1895.4 907.1 1905.9 900.1 C1916.4 893.1 1927.0 886.0 1937.5 879.0 C1948.0 872.0 1960.3 863.7 1969.1 857.9 C1977.8 852.1 1982.9 849.0 1990.0 844.4 C1997.1 839.8 2001.5 836.8 2011.5 830.1 C2021.5 823.4 2036.4 813.8 2050.2 804.4 C2063.9 795.0 2086.7 778.6 2094.0 773.5 L2094 1612 L1551 1612 L1551 1488 C1553.2 1483.6 1558.1 1472.4 1564.5 1461.7 C1570.9 1451.0 1579.1 1437.8 1589.6 1424.0 C1600.0 1410.2 1614.7 1393.6 1627.2 1379.0 C1639.7 1364.4 1652.3 1350.5 1664.8 1336.3 C1677.3 1322.1 1691.1 1307.5 1702.4 1293.7 C1713.7 1279.9 1723.3 1267.4 1732.5 1253.6 C1741.7 1239.8 1751.3 1222.6 1757.6 1211.0 C1763.8 1199.4 1765.0 1194.8 1770.0 1184.0 C1775.0 1173.2 1782.1 1158.9 1787.6 1146.4 C1793.0 1133.9 1798.5 1121.4 1802.7 1108.8 C1806.9 1096.2 1809.8 1085.6 1812.7 1071.0 C1815.6 1056.4 1818.3 1035.6 1820.0 1021.0 C1821.7 1006.4 1822.1 993.7 1822.7 983.4 C1823.3 973.1 1823.6 963.4 1823.8 959.4 Z"/></clipPath>
<clipPath id="cc"><path d="M2094.0 537.0 C2083.1 539.7 2047.6 545.6 2028.3 553.3 C2009.0 561.0 1994.9 570.9 1978.2 583.4 C1961.5 595.9 1942.6 613.9 1928.0 628.5 C1913.4 643.1 1900.8 657.0 1890.4 671.2 C1880.0 685.4 1872.9 699.2 1865.4 713.8 C1857.9 728.4 1850.5 745.1 1845.3 758.9 C1840.1 772.7 1836.8 784.1 1834.0 796.5 C1831.2 808.9 1830.0 816.5 1828.5 833.0 C1827.0 849.5 1825.8 874.6 1825.0 895.7 C1824.2 916.8 1824.0 948.8 1823.8 959.4 C1827.0 956.9 1834.3 950.7 1842.7 944.3 C1851.1 937.9 1863.8 928.6 1874.3 921.2 C1884.8 913.8 1895.4 907.1 1905.9 900.1 C1916.4 893.1 1927.0 886.0 1937.5 879.0 C1948.0 872.0 1960.3 863.7 1969.1 857.9 C1977.8 852.1 1982.9 849.0 1990.0 844.4 C1997.1 839.8 2001.5 836.8 2011.5 830.1 C2021.5 823.4 2036.4 813.8 2050.2 804.4 C2063.9 795.0 2086.7 778.6 2094.0 773.5 Z"/></clipPath>
</defs>
<rect x="1551" y="432" width="544" height="1180" fill="#00060c"/>
<g clip-path="url(#cg)">
<rect x="1551" y="432" width="544" height="1180" fill="url(#bgv)"/>
<rect x="1551" y="432" width="544" height="1180" fill="url(#blu)"/>
<rect x="1551" y="432" width="544" height="300" fill="url(#lft)"/>
<rect x="1551" y="432" width="544" height="1180" fill="url(#tr)"/>
<path d="M2094.0 537.0 C2083.1 539.7 2047.6 545.6 2028.3 553.3 C2009.0 561.0 1994.9 570.9 1978.2 583.4 C1961.5 595.9 1942.6 613.9 1928.0 628.5 C1913.4 643.1 1900.8 657.0 1890.4 671.2 C1880.0 685.4 1872.9 699.2 1865.4 713.8 C1857.9 728.4 1850.5 745.1 1845.3 758.9 C1840.1 772.7 1836.8 784.1 1834.0 796.5 C1831.2 808.9 1830.0 816.5 1828.5 833.0 C1827.0 849.5 1825.8 874.6 1825.0 895.7 C1824.2 916.8 1824.0 948.8 1823.8 959.4" fill="none" stroke="#009c8a" stroke-width="130" opacity=".36" filter="url(#f34)"/><path d="M2094.0 537.0 C2083.1 539.7 2047.6 545.6 2028.3 553.3 C2009.0 561.0 1994.9 570.9 1978.2 583.4 C1961.5 595.9 1942.6 613.9 1928.0 628.5 C1913.4 643.1 1900.8 657.0 1890.4 671.2 C1880.0 685.4 1872.9 699.2 1865.4 713.8 C1857.9 728.4 1850.5 745.1 1845.3 758.9 C1840.1 772.7 1836.8 784.1 1834.0 796.5 C1831.2 808.9 1830.0 816.5 1828.5 833.0 C1827.0 849.5 1825.8 874.6 1825.0 895.7 C1824.2 916.8 1824.0 948.8 1823.8 959.4" fill="none" stroke="#00a692" stroke-width="44" opacity=".34" filter="url(#f20)"/>
<path d="M2094.0 537.0 C2083.1 539.7 2047.6 545.6 2028.3 553.3 C2009.0 561.0 1994.9 570.9 1978.2 583.4 C1961.5 595.9 1942.6 613.9 1928.0 628.5 C1913.4 643.1 1900.8 657.0 1890.4 671.2 C1880.0 685.4 1872.9 699.2 1865.4 713.8 C1857.9 728.4 1850.5 745.1 1845.3 758.9 C1840.1 772.7 1836.8 784.1 1834.0 796.5 C1831.2 808.9 1830.0 816.5 1828.5 833.0 C1827.0 849.5 1825.8 874.6 1825.0 895.7 C1824.2 916.8 1824.0 948.8 1823.8 959.4" fill="none" stroke="#00b09c" stroke-width="14" opacity=".22" filter="url(#f8)"/>
<path d="M1823.8 959.4 C1820.3 963.0 1810.4 972.0 1802.7 981.0 C1795.0 990.0 1786.0 1001.4 1777.6 1013.5 C1769.2 1025.6 1760.8 1039.8 1752.5 1053.6 C1744.2 1067.3 1735.8 1081.4 1727.5 1096.0 C1719.2 1110.6 1710.8 1125.9 1702.4 1141.4 C1694.0 1156.9 1684.4 1176.1 1677.3 1189.0 C1670.2 1201.9 1667.1 1207.0 1660.0 1219.0 C1652.9 1231.0 1644.4 1245.6 1634.7 1261.0 C1625.0 1276.4 1612.5 1295.4 1602.0 1311.3 C1591.5 1327.2 1580.5 1343.6 1572.0 1356.4 C1563.5 1369.2 1554.5 1382.7 1551.0 1388.0" fill="none" stroke="url(#gglow)" stroke-width="12" opacity=".6" filter="url(#f4)"/>
</g>
<g clip-path="url(#cw)">
<rect x="1551" y="770" width="544" height="842" fill="url(#wv)"/>
<rect x="1551" y="770" width="544" height="842" fill="url(#wvr)"/>
<path d="M1823.8 959.4 C1827.0 956.9 1834.3 950.7 1842.7 944.3 C1851.1 937.9 1863.8 928.6 1874.3 921.2 C1884.8 913.8 1895.4 907.1 1905.9 900.1 C1916.4 893.1 1927.0 886.0 1937.5 879.0 C1948.0 872.0 1960.3 863.7 1969.1 857.9 C1977.8 852.1 1982.9 849.0 1990.0 844.4 C1997.1 839.8 2001.5 836.8 2011.5 830.1 C2021.5 823.4 2036.4 813.8 2050.2 804.4 C2063.9 795.0 2086.7 778.6 2094.0 773.5" fill="none" stroke="#2a7f86" stroke-width="36" opacity=".55" filter="url(#f14)"/>
<path d="M1823.8 959.4 C1823.6 963.4 1823.3 973.1 1822.7 983.4 C1822.1 993.7 1821.7 1006.4 1820.0 1021.0 C1818.3 1035.6 1815.6 1056.4 1812.7 1071.0 C1809.8 1085.6 1806.9 1096.2 1802.7 1108.8 C1798.5 1121.4 1793.0 1133.9 1787.6 1146.4 C1782.1 1158.9 1775.0 1173.2 1770.0 1184.0 C1765.0 1194.8 1763.8 1199.4 1757.6 1211.0 C1751.3 1222.6 1741.7 1239.8 1732.5 1253.6 C1723.3 1267.4 1713.7 1279.9 1702.4 1293.7 C1691.1 1307.5 1677.3 1322.1 1664.8 1336.3 C1652.3 1350.5 1639.7 1364.4 1627.2 1379.0 C1614.7 1393.6 1600.0 1410.2 1589.6 1424.0 C1579.1 1437.8 1570.9 1451.0 1564.5 1461.7 C1558.1 1472.4 1553.2 1483.6 1551.0 1488.0" fill="none" stroke="url(#wglow)" stroke-width="50" opacity=".5" filter="url(#f20)"/><path d="M1823.8 959.4 C1823.6 963.4 1823.3 973.1 1822.7 983.4 C1822.1 993.7 1821.7 1006.4 1820.0 1021.0 C1818.3 1035.6 1815.6 1056.4 1812.7 1071.0 C1809.8 1085.6 1806.9 1096.2 1802.7 1108.8 C1798.5 1121.4 1793.0 1133.9 1787.6 1146.4 C1782.1 1158.9 1775.0 1173.2 1770.0 1184.0 C1765.0 1194.8 1763.8 1199.4 1757.6 1211.0 C1751.3 1222.6 1741.7 1239.8 1732.5 1253.6 C1723.3 1267.4 1713.7 1279.9 1702.4 1293.7 C1691.1 1307.5 1677.3 1322.1 1664.8 1336.3 C1652.3 1350.5 1639.7 1364.4 1627.2 1379.0 C1614.7 1393.6 1600.0 1410.2 1589.6 1424.0 C1579.1 1437.8 1570.9 1451.0 1564.5 1461.7 C1558.1 1472.4 1553.2 1483.6 1551.0 1488.0" fill="none" stroke="url(#wglow)" stroke-width="10" opacity=".55" filter="url(#f4)"/>
</g>
<path d="M2094.0 537.0 C2083.1 539.7 2047.6 545.6 2028.3 553.3 C2009.0 561.0 1994.9 570.9 1978.2 583.4 C1961.5 595.9 1942.6 613.9 1928.0 628.5 C1913.4 643.1 1900.8 657.0 1890.4 671.2 C1880.0 685.4 1872.9 699.2 1865.4 713.8 C1857.9 728.4 1850.5 745.1 1845.3 758.9 C1840.1 772.7 1836.8 784.1 1834.0 796.5 C1831.2 808.9 1830.0 816.5 1828.5 833.0 C1827.0 849.5 1825.8 874.6 1825.0 895.7 C1824.2 916.8 1824.0 948.8 1823.8 959.4 C1827.0 956.9 1834.3 950.7 1842.7 944.3 C1851.1 937.9 1863.8 928.6 1874.3 921.2 C1884.8 913.8 1895.4 907.1 1905.9 900.1 C1916.4 893.1 1927.0 886.0 1937.5 879.0 C1948.0 872.0 1960.3 863.7 1969.1 857.9 C1977.8 852.1 1982.9 849.0 1990.0 844.4 C1997.1 839.8 2001.5 836.8 2011.5 830.1 C2021.5 823.4 2036.4 813.8 2050.2 804.4 C2063.9 795.0 2086.7 778.6 2094.0 773.5 Z" fill="#7be2ea" filter="url(#f1_2)"/>
<g clip-path="url(#cc)">
<path d="M2094.0 537.0 C2083.1 539.7 2047.6 545.6 2028.3 553.3 C2009.0 561.0 1994.9 570.9 1978.2 583.4 C1961.5 595.9 1942.6 613.9 1928.0 628.5 C1913.4 643.1 1900.8 657.0 1890.4 671.2 C1880.0 685.4 1872.9 699.2 1865.4 713.8 C1857.9 728.4 1850.5 745.1 1845.3 758.9 C1840.1 772.7 1836.8 784.1 1834.0 796.5 C1831.2 808.9 1830.0 816.5 1828.5 833.0 C1827.0 849.5 1825.8 874.6 1825.0 895.7 C1824.2 916.8 1824.0 948.8 1823.8 959.4" fill="none" stroke="#68fffb" stroke-width="56" opacity=".95" filter="url(#f14)"/>
</g>
</svg></div>
<div class="a" style="left:1738px;top:452.5px;width:168.5px;height:49.5px;border-radius:25px;background:#000"></div>
<div class="a" style="left:1571px;top:1456.5px;width:503px;height:86.5px;border-radius:29px;background:#fff"></div>
<span class="t" style="left:1764.0px;top:1488.8px;font-size:23.6px;line-height:1;color:#111;letter-spacing:-0.45px;">Hello World</span>
<div class="a" style="left:1278px;top:1702px;width:163px;height:52px;background:#fff;border-radius:13px;box-shadow:0 0 0 1px rgba(0,0,0,.04),0 1px 4px rgba(0,0,0,.12)"></div>
<svg class="a" style="left:1296px;top:1715.5px" width="27" height="27" viewBox="0 0 27 27" ><circle cx="13.5" cy="13.5" r="13" fill="#0a73f7"/><path d="M10.2 8.3 Q10.2 7.2 11.2 7.7 L19.2 12.7 Q20.2 13.5 19.2 14.3 L11.2 19.3 Q10.2 19.8 10.2 18.7Z" fill="#fff"/></svg>
<svg class="a" style="left:1342.5px;top:1715.5px" width="27" height="26" viewBox="0 0 27 26" ><rect x="2" y="2" width="22" height="21.5" rx="3.5" fill="none" stroke="#4a4a4a" stroke-width="2.2"/><path d="M9.6 6.6 L9.6 18.2 L12.6 15.4 L14.6 19.8 L16.6 18.9 L14.7 14.6 L18.6 14.4Z" fill="#4a4a4a"/></svg>
<svg class="a" style="left:1396.5px;top:1717.5px" width="27" height="22" viewBox="0 0 27 22" ><g fill="none" stroke="#6a6a6a" stroke-width="1.8"><rect x="1.2" y="1.2" width="5.6" height="7.6" rx="1.2"/><rect x="10.3" y="1.2" width="5.6" height="7.6" rx="1.2"/><rect x="19.4" y="1.2" width="5.6" height="7.6" rx="1.2"/><rect x="1.2" y="11.8" width="5.6" height="7.6" rx="1.2"/><rect x="10.3" y="11.8" width="5.6" height="7.6" rx="1.2"/><rect x="19.4" y="11.8" width="5.6" height="7.6" rx="1.2"/></g></svg>
<div class="a" style="left:1461px;top:1702px;width:63px;height:52px;background:#fff;border-radius:13px;box-shadow:0 0 0 1px rgba(0,0,0,.04),0 1px 4px rgba(0,0,0,.12)"></div>
<svg class="a" style="left:1479.5px;top:1716px" width="26" height="26" viewBox="0 0 26 26" ><rect x="1.4" y="1.4" width="23.2" height="9.6" rx="4.8" fill="none" stroke="#4a4a4a" stroke-width="2.2"/><circle cx="6.6" cy="6.2" r="2.6" fill="#4a4a4a"/><rect x="0.4" y="14.6" width="25.2" height="11" rx="5.5" fill="#4a4a4a"/><circle cx="19.6" cy="20.1" r="3.1" fill="#fff"/></svg>
<div class="a" style="left:1544px;top:1702px;width:365px;height:52px;background:#fff;border-radius:13px;box-shadow:0 0 0 1px rgba(0,0,0,.04),0 1px 4px rgba(0,0,0,.12)"></div>
<svg class="a" style="left:1562.5px;top:1716.5px" width="17" height="24" viewBox="0 0 17 24" ><rect x="1.6" y="1.2" width="13.6" height="21.6" rx="3" fill="#e6e6e6" stroke="#6e6e6e" stroke-width="1.8"/><path d="M6 3.2h5" stroke="#6e6e6e" stroke-width="1.4" stroke-linecap="round"/><path d="M6 21h5" stroke="#8a8a8a" stroke-width="1" stroke-linecap="round"/></svg>
<span class="t" style="left:1591.0px;top:1717.3px;font-size:23.5px;line-height:1;color:#333;letter-spacing:-0.23px;">Automatic – iPhone 16 Pro</span>
<svg class="a" style="left:1875px;top:1722px" width="18" height="14" viewBox="0 0 18 14" ><path d="M2.2 2.6 L9 10.4 L15.8 2.6" fill="none" stroke="#333" stroke-width="2.8" stroke-linecap="round" stroke-linejoin="round"/></svg>
<div class="a" style="left:2160px;top:1702px;width:208.5px;height:52px;background:#fff;border-radius:13px;box-shadow:0 0 0 1px rgba(0,0,0,.04),0 1px 4px rgba(0,0,0,.12)"></div>
<svg class="a" style="left:2178.0px;top:1714.5px" width="28" height="28" viewBox="0 0 28 28" ><g fill="none" stroke="#4a4a4a" stroke-width="2.4" stroke-linecap="round" stroke-linejoin="round"><circle cx="10.8" cy="10.8" r="8.6"/><path d="M17.3 17.3 L25 25" stroke-width="3.2"/><path d="M7 10.8h7.6" /></g></svg>
<svg class="a" style="left:2226.2px;top:1714.5px" width="28" height="28" viewBox="0 0 28 28" ><g fill="none" stroke="#4a4a4a" stroke-width="2.4" stroke-linecap="round" stroke-linejoin="round"><circle cx="10.8" cy="10.8" r="8.6"/><path d="M17.3 17.3 L25 25" stroke-width="3.2"/><path d="M9.3 8.2 L11.2 6.9 V14.8" stroke-width="1.9"/></g></svg>
<svg class="a" style="left:2274.4px;top:1714.5px" width="28" height="28" viewBox="0 0 28 28" ><g fill="none" stroke="#7a7a7a" stroke-width="2.4" stroke-linecap="round" stroke-linejoin="round"><circle cx="10.8" cy="10.8" r="8.6"/><path d="M17.3 17.3 L25 25" stroke-width="3.2"/><rect x="7.6" y="7.6" width="6.4" height="6.4" rx="1" stroke-width="1.9"/></g></svg>
<svg class="a" style="left:2322.6px;top:1714.5px" width="28" height="28" viewBox="0 0 28 28" ><g fill="none" stroke="#4a4a4a" stroke-width="2.4" stroke-linecap="round" stroke-linejoin="round"><circle cx="10.8" cy="10.8" r="8.6"/><path d="M17.3 17.3 L25 25" stroke-width="3.2"/><path d="M7 10.8h7.6M10.8 7v7.6" /></g></svg>
<div class="a" style="left:112px;top:1779px;width:2280px;height:55px;background:#fff"></div>
<div class="a" style="left:112px;top:1778px;width:2280px;height:1.5px;background:#dcdcdc"></div>
<svg class="a" style="left:134.5px;top:1797.5px" width="30" height="18.5" viewBox="0 0 30 18.5" ><path d="M4 0 L21.5 0 Q23.5 0 24.8 1.8 L29.2 7.6 Q30.4 9.25 29.2 10.9 L24.8 16.7 Q23.5 18.5 21.5 18.5 L4 18.5 Q0 18.5 0 14.5 L0 4 Q0 0 4 0Z" fill="#0a78ff"/></svg>
<div class="a" style="left:180px;top:1795px;width:1.5px;height:24px;background:#dcdcdc"></div>
<div class="a" style="left:190.5px;top:1789px;width:75.5px;height:35.5px;border-radius:18px;background:#ebebeb"></div>
<span class="t" style="left:209.0px;top:1796.2px;font-size:22px;line-height:1;color:#686868;letter-spacing:0.25px;">Vim</span>
<span class="t" style="left:287.0px;top:1796.2px;font-size:22px;line-height:1;color:#808080;font-weight:bold;">i</span>
<span class="t" style="left:299.7px;top:1796.2px;font-size:22px;line-height:1;color:#b9b9b9;letter-spacing:-0.21px;">inside…</span>
<span class="t" style="left:392.0px;top:1796.2px;font-size:22px;line-height:1;color:#808080;font-weight:bold;">b</span>
<span class="t" style="left:412.4px;top:1796.2px;font-size:22px;line-height:1;color:#b9b9b9;letter-spacing:0.87px;">prior word</span>
<span class="t" style="left:531.1px;top:1796.2px;font-size:22px;line-height:1;color:#808080;font-weight:bold;">w</span>
<span class="t" style="left:557.5px;top:1796.2px;font-size:22px;line-height:1;color:#b9b9b9;letter-spacing:0.71px;">next word</span>
<span class="t" style="left:672.0px;top:1796.2px;font-size:22px;line-height:1;color:#808080;font-weight:bold;">e</span>
<span class="t" style="left:692.4px;top:1796.2px;font-size:22px;line-height:1;color:#b9b9b9;letter-spacing:0.79px;">end of word</span>
<span class="t" style="left:829.6px;top:1796.2px;font-size:22px;line-height:1;color:#808080;font-weight:bold;">0</span>
<span class="t" style="left:851.4px;top:1796.2px;font-size:22px;line-height:1;color:#b9b9b9;letter-spacing:0.81px;">start of line</span>
<span class="t" style="left:983.5px;top:1796.2px;font-size:22px;line-height:1;color:#808080;font-weight:bold;">$</span>
<span class="t" style="left:1003.9px;top:1796.2px;font-size:22px;line-height:1;color:#b9b9b9;letter-spacing:0.77px;">end of line</span>
<span class="t" style="left:1126.5px;top:1796.2px;font-size:22px;line-height:1;color:#808080;font-weight:bold;">f</span>
<span class="t" style="left:1142.0px;top:1796.2px;font-size:22px;line-height:1;color:#b9b9b9;letter-spacing:0.52px;">next occurrence of…</span>
<span class="t" style="left:1368.4px;top:1796.2px;font-size:22px;line-height:1;color:#808080;font-weight:bold;">%</span>
<span class="t" style="left:1397.5px;top:1796.2px;font-size:22px;line-height:1;color:#b9b9b9;letter-spacing:0.90px;">matching delimiter</span>
<span class="t" style="left:1605.4px;top:1796.2px;font-size:22px;line-height:1;color:#808080;font-weight:bold;">^</span>
<span class="t" style="left:1626.5px;top:1796.2px;font-size:22px;line-height:1;color:#b9b9b9;letter-spacing:0.89px;">first visible character</span>
<span class="t" style="left:1859.7px;top:1796.2px;font-size:22px;line-height:1;color:#808080;font-weight:bold;">{</span>
<span class="t" style="left:1876.6px;top:1796.2px;font-size:22px;line-height:1;color:#b9b9b9;letter-spacing:0.70px;">previous paragraph</span>
<span class="t" style="left:2158.5px;top:1796.2px;font-size:22px;line-height:1;color:#707070;letter-spacing:0.74px;-webkit-text-stroke:.55px #707070;">Line: 4</span>
<span class="t" style="left:2243.0px;top:1796.2px;font-size:22px;line-height:1;color:#707070;letter-spacing:0.50px;-webkit-text-stroke:.55px #707070;">Col: 1</span>
<div class="a" style="left:2322.5px;top:1795px;width:1.5px;height:24px;background:#dcdcdc"></div>
<svg class="a" style="left:2340.5px;top:1794px" width="28" height="27" viewBox="0 0 28 27" ><rect x="1.3" y="1.3" width="25.4" height="24.4" rx="4.5" fill="none" stroke="#6e6e6e" stroke-width="2"/><rect x="5" y="16.5" width="18" height="5.6" rx="1.6" fill="#7e7e7e"/></svg>
</div></div></body></html>
